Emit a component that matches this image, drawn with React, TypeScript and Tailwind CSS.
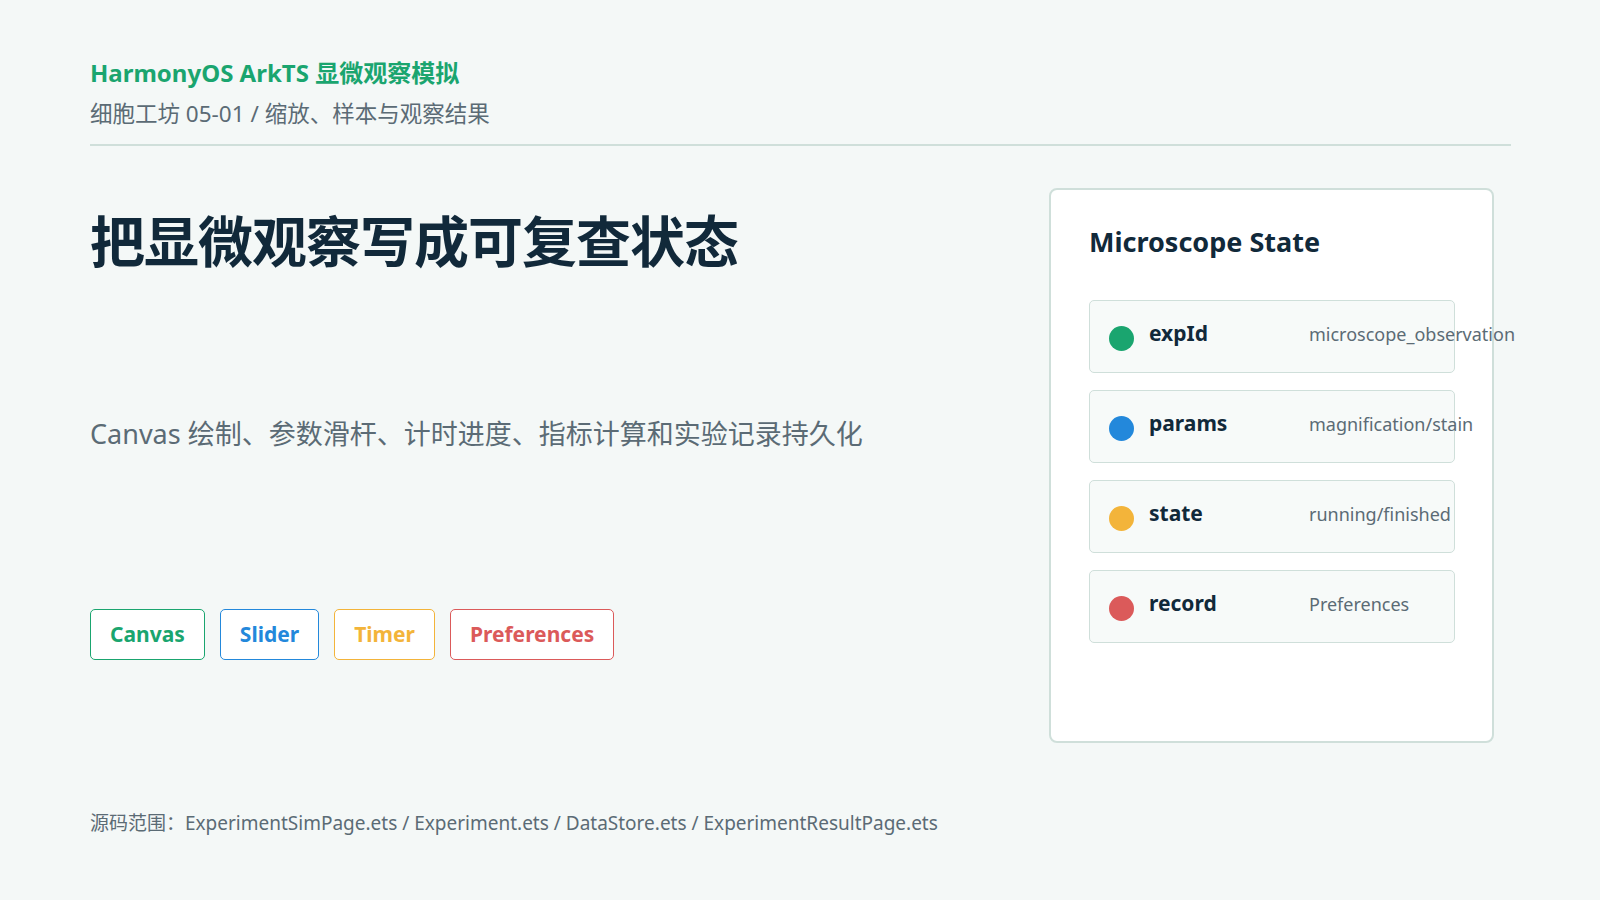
export default function App() {
  const font = { fontFamily: '"Noto Sans", "Noto Sans CJK SC", sans-serif' };
  const rows = [
    { k: "expId", v: "microscope_observation", c: "bg-[#1aa56f]" },
    { k: "params", v: "magnification/stain", c: "bg-[#2388db]" },
    { k: "state", v: "running/finished", c: "bg-[#f3b43a]" },
    { k: "record", v: "Preferences", c: "bg-[#db5a5a]" },
  ];
  const tags = [
    { t: "Canvas", c: "text-[#1aa56f] border-[#1aa56f]" },
    { t: "Slider", c: "text-[#2388db] border-[#2388db]" },
    { t: "Timer", c: "text-[#f3b43a] border-[#f3b43a]" },
    { t: "Preferences", c: "text-[#db5a5a] border-[#db5a5a]" },
  ];
  return (
    <div style={font} className="w-[1600px] h-[900px] bg-[#f4f8f7] px-[90px] pt-[56px] text-[#11293a] overflow-hidden">
      <div className="text-[24px] font-bold text-[#1aa56f] leading-[34px]">HarmonyOS ArkTS 显微观察模拟</div>
      <div className="text-[22.5px] text-[#5b6b75] mt-[8px] leading-[32px]">细胞工坊 05-01 / 缩放、样本与观察结果</div>
      <div className="h-[2px] bg-[#cfdfda] mt-[14px] w-[1421px]" />
      <div className="flex mt-[42px]">
        <div className="flex-1 flex flex-col">
          <div className="text-[55px] font-bold leading-[70px] mt-[18px] tracking-[-1px]">把显微观察写成可复查状态</div>
          <div className="text-[27px] text-[#5b6b75] mt-[138px] leading-[40px]">Canvas 绘制、参数滑杆、计时进度、指标计算和实验记录持久化</div>
          <div className="flex gap-[15px] mt-[155px]">
            {tags.map((t) => (
              <div key={t.t} className={`h-[51px] px-[19px] flex items-center border-[1.5px] rounded-[5px] bg-white text-[21px] font-bold ${t.c}`}>{t.t}</div>
            ))}
          </div>
        </div>
        <div className="w-[445px] h-[555px] bg-white border-2 border-[#cfdfda] rounded-[8px] mr-[16px] pt-[32px] px-[38px] shrink-0">
          <div className="text-[27px] font-bold leading-[40px]">Microscope State</div>
          <div className="flex flex-col gap-[17px] mt-[38px] w-[366px]">
            {rows.map((r) => (
              <div key={r.k} className="h-[73px] bg-[#f7faf9] border border-[#cfdfda] rounded-[5px] flex items-center pl-[19px]">
                <div className={`w-[25px] h-[25px] rounded-full shrink-0 ${r.c} mt-[4px]`} />
                <div className="ml-[15px] w-[160px] shrink-0 text-[21px] font-bold -mt-[6px]">{r.k}</div>
                <div className="text-[18px] text-[#5b6b75] whitespace-nowrap -mt-[4px]">{r.v}</div>
              </div>
            ))}
          </div>
        </div>
      </div>
      <div className="text-[19px] text-[#5b6b75] mt-[66px]">源码范围：ExperimentSimPage.ets / Experiment.ets / DataStore.ets / ExperimentResultPage.ets</div>
    </div>
  );
}
